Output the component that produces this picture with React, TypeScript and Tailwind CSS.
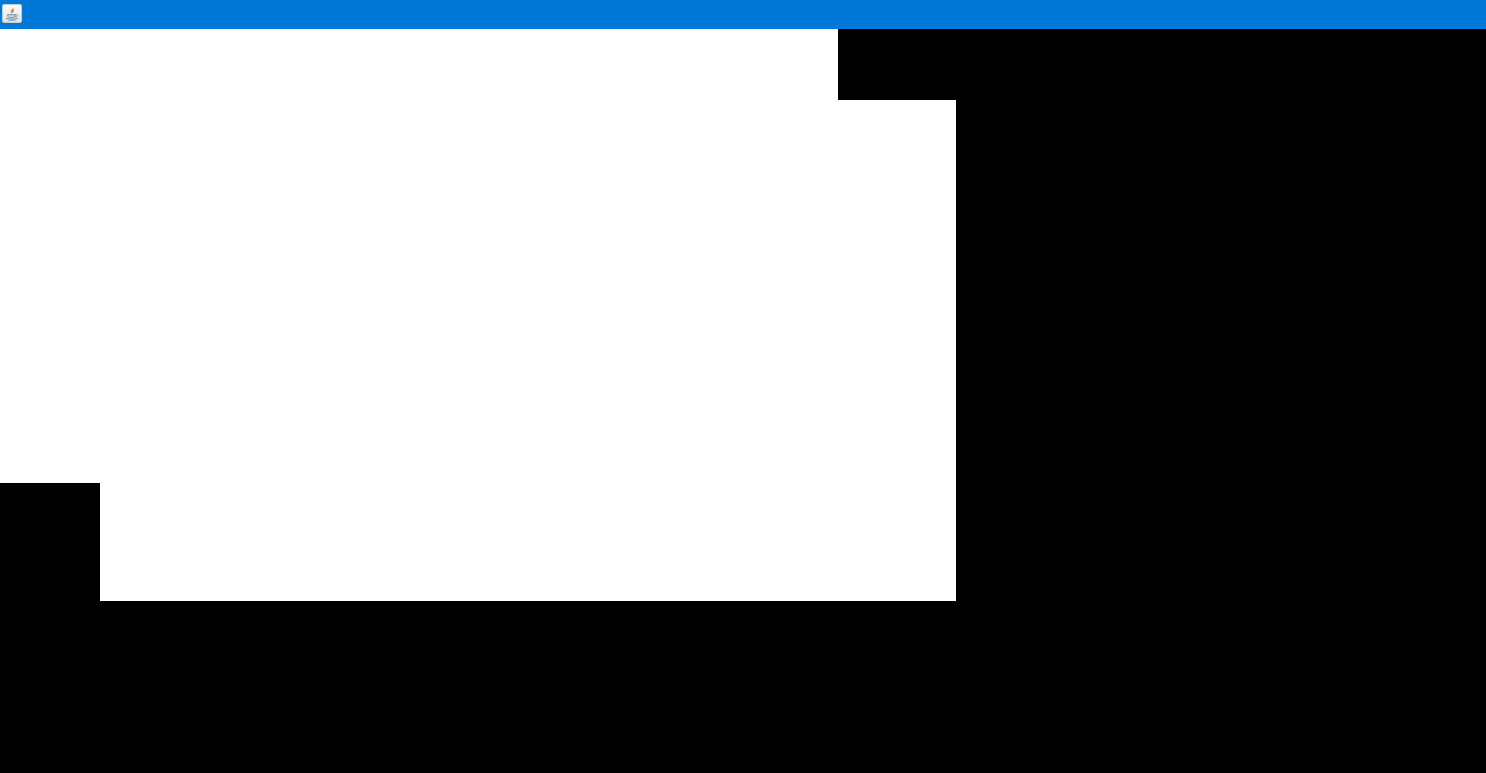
const JavaIcon = () => (
  <svg width="16" height="16" viewBox="0 0 16 16" fill="none">
    {/* flame */}
    <path d="M8.8 1C9.8 3 6.2 3.8 6.6 5.8C6.8 6.6 7.2 7 7.6 7.8C8 6.8 10.4 5.8 10 4.2C9.8 3.2 9.2 2.2 8.8 1Z" fill="#ea8a2c" />
    {/* cup */}
    <path d="M3.6 8.6H11.2V10C11.2 11 10.4 11.6 9.4 11.6H5.4C4.4 11.6 3.6 11 3.6 10Z" fill="#c3d2de" stroke="#6f93ad" strokeWidth="0.9" />
    <path d="M11.2 8.8H12.6C13.8 8.8 13.8 10.6 12.2 10.8H11" stroke="#6f93ad" strokeWidth="0.9" />
    {/* saucer */}
    <path d="M2 12.4C4.5 13.5 11 13.5 13.6 12.4" stroke="#5f87a3" strokeWidth="1" />
    <path d="M4.4 14.5H11.4" stroke="#8eabc0" strokeWidth="0.9" />
  </svg>
);

export default function App() {
  return (
    <div className="flex h-[773px] w-[1486px] flex-col overflow-hidden bg-black">
      <header className="flex h-[29px] shrink-0 items-start bg-[#0078d7] pl-[2px] pt-[4px]">
        <button className="flex h-[19px] w-[20px] items-center justify-center rounded-[2px] border border-[#c4ccd4] bg-gradient-to-b from-[#fbfbfb] to-[#dfe3e7]">
          <JavaIcon />
        </button>
      </header>
      <main className="flex flex-col">
        <div className="h-[71px] w-[838px] bg-white" />
        <div className="h-[383px] w-[956px] bg-white" />
        <div className="ml-[100px] h-[118px] w-[856px] bg-white" />
      </main>
    </div>
  );
}
